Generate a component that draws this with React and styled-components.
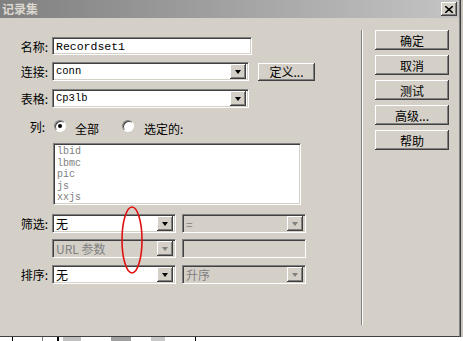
import React from "react";
import styled, { createGlobalStyle, css } from "styled-components";

const GlobalStyle = createGlobalStyle`
  html, body {
    margin: 0;
    padding: 0;
    background: #c8c4bc;
  }
  body {
    width: 463px;
    height: 341px;
    overflow: hidden;
    font-family: "Noto Sans CJK SC", "Liberation Sans", sans-serif;
    font-size: 12px;
    color: #000;
  }
`;

const raised = css`
  background: #d4d0c8;
  box-shadow: inset -1px -1px #404040, inset 1px 1px #ffffff,
    inset -2px -2px #808080, inset 2px 2px #d4d0c8;
`;

const sunken = css`
  border-top: 1px solid #808080;
  border-left: 1px solid #808080;
  border-right: 1px solid #ffffff;
  border-bottom: 1px solid #ffffff;
  box-shadow: inset 1px 1px #404040, inset -1px -1px #d4d0c8;
`;

const Screen = styled.div`
  position: relative;
  display: flex;
  flex-direction: column;
  width: 463px;
  height: 341px;
`;

const Dialog = styled.div`
  display: flex;
  flex-direction: column;
  width: 459px;
  height: 336px;
  background: #d4d0c8;
  border-right: 1px solid #808080;
  border-bottom: 1px solid #404040;
  box-shadow: 1px 0 #404040;
`;

const TitleBar = styled.div`
  display: flex;
  align-items: center;
  justify-content: space-between;
  height: 18px;
  padding: 0 2px 0 2px;
  background: linear-gradient(to right, #808080, #c4c4c4);
`;

const Title = styled.span`
  color: #dcd8d0;
  font-weight: bold;
  font-size: 12px;
  line-height: 18px;
`;

const CloseButton = styled.div`
  ${raised};
  width: 16px;
  height: 14px;
  display: flex;
  align-items: center;
  justify-content: center;
  margin-right: 0;
`;

const Body = styled.div`
  display: flex;
  flex: 1;
`;

const Form = styled.div`
  display: flex;
  flex-direction: column;
  width: 361px;
`;

const Row = styled.div`
  display: flex;
  align-items: center;
  height: ${(p) => p.$h || 19}px;
  margin-top: ${(p) => p.$mt}px;
`;

const Label = styled.div`
  width: 52px;
  padding-right: ${(p) => p.$pr ?? 4}px;
  box-sizing: border-box;
  text-align: right;
  white-space: nowrap;
  flex: none;
`;

const TextField = styled.div`
  ${sunken};
  box-sizing: border-box;
  width: ${(p) => p.$w}px;
  height: ${(p) => p.$h || 19}px;
  margin-left: ${(p) => p.$ml || 0}px;
  padding-left: 3px;
  display: flex;
  align-items: center;
  background: ${(p) => (p.$disabled ? "#d4d0c8" : "#ffffff")};
  font-family: "Liberation Mono", monospace;
  font-size: ${(p) => p.$fs || 11}px;
  flex: none;
`;

const Select = styled.div`
  ${sunken};
  box-sizing: border-box;
  width: ${(p) => p.$w}px;
  height: 19px;
  margin-left: ${(p) => p.$ml || 0}px;
  padding: 0 2px 0 3px;
  display: flex;
  align-items: center;
  justify-content: space-between;
  background: ${(p) => (p.$disabled ? "#d4d0c8" : "#ffffff")};
  color: ${(p) => (p.$disabled ? "#808080" : "#000")};
  flex: none;
`;

const SelectText = styled.span`
  font-family: ${(p) =>
    p.$mono ? '"Liberation Mono", monospace' : '"Noto Sans CJK SC", sans-serif'};
  font-size: ${(p) => (p.$mono ? 10.5 : 12)}px;
  line-height: 15px;
  white-space: nowrap;
`;

const ArrowButton = styled.div`
  ${raised};
  width: 16px;
  height: 15px;
  display: flex;
  align-items: center;
  justify-content: center;
  flex: none;
  &::after {
    content: "";
    width: 0;
    height: 0;
    border-left: 3.5px solid transparent;
    border-right: 3.5px solid transparent;
    border-top: 4px solid ${(p) => (p.$disabled ? "#808080" : "#000")};
    margin-top: 1px;
  }
`;

const PushButton = styled.div`
  ${raised};
  width: ${(p) => p.$w}px;
  height: ${(p) => p.$h}px;
  margin-left: ${(p) => p.$ml || 0}px;
  display: flex;
  align-items: center;
  justify-content: center;
  font-size: 12px;
  flex: none;
`;

const RadioDot = styled.div`
  width: 12px;
  height: 12px;
  box-sizing: border-box;
  border-radius: 50%;
  background: #fff;
  border: 1px solid;
  border-color: #808080 #ffffff #ffffff #808080;
  box-shadow: inset 1px 1px #404040;
  display: flex;
  align-items: center;
  justify-content: center;
  margin-left: ${(p) => p.$ml}px;
  flex: none;
  &::after {
    content: "";
    display: ${(p) => (p.$checked ? "block" : "none")};
    width: 4px;
    height: 4px;
    border-radius: 50%;
    background: #000;
  }
`;

const RadioText = styled.span`
  margin-left: ${(p) => p.$ml}px;
  padding-top: 4px;
  white-space: nowrap;
`;

const ListBox = styled.div`
  ${sunken};
  box-sizing: border-box;
  width: 248px;
  height: 62px;
  margin: 9px 0 0 53px;
  padding: 2px 3px;
  background: #fff;
  color: #808080;
  font-family: "Liberation Mono", monospace;
  font-size: 10px;
  line-height: 11.5px;
  overflow: hidden;
`;

const Separator = styled.div`
  width: 1px;
  height: 295px;
  margin-top: 12px;
  background: #808080;
  border-right: 1px solid #ffffff;
  flex: none;
`;

const ButtonColumn = styled.div`
  display: flex;
  flex-direction: column;
  gap: 5px;
  margin: 12px 0 0 12px;
`;

const Taskbar = styled.div`
  display: flex;
  align-items: flex-end;
  height: 4px;
  background: #ffffff;
`;

const Tick = styled.div`
  width: ${(p) => p.$w}px;
  height: 4px;
  margin-left: ${(p) => p.$ml}px;
  background: ${(p) => p.$c};
`;

const Annotation = styled.svg`
  position: absolute;
  left: 120px;
  top: 206px;
`;

const columns = ["lbid", "lbmc", "pic", "js", "xxjs"];

export default function App() {
  return (
    <Screen>
      <GlobalStyle />
      <Dialog>
        <TitleBar>
          <Title>记录集</Title>
          <CloseButton>
            <svg width="8" height="7" viewBox="0 0 8 7">
              <path d="M0 0 L8 7 M8 0 L0 7" stroke="#000" strokeWidth="1.6" />
            </svg>
          </CloseButton>
        </TitleBar>
        <Body>
          <Form>
            <Row $mt={19} $h={18}>
              <Label>名称:</Label>
              <TextField $w={200} $h={18} $fs={11.5}>Recordset1</TextField>
            </Row>
            <Row $mt={7}>
              <Label>连接:</Label>
              <Select $w={197}>
                <SelectText $mono>conn</SelectText>
                <ArrowButton />
              </Select>
              <PushButton $w={57} $h={18} $ml={9}>定义...</PushButton>
            </Row>
            <Row $mt={8}>
              <Label>表格:</Label>
              <Select $w={197}>
                <SelectText $mono>Cp3lb</SelectText>
                <ArrowButton />
              </Select>
            </Row>
            <Row $mt={10} $h={16}>
              <Label $pr={7}>列:</Label>
              <RadioDot $checked $ml={2} />
              <RadioText $ml={9}>全部</RadioText>
              <RadioDot $ml={23} />
              <RadioText $ml={10}>选定的:</RadioText>
            </Row>
            <ListBox>
              {columns.map((c) => (
                <div key={c}>{c}</div>
              ))}
            </ListBox>
            <Row $mt={9}>
              <Label>筛选:</Label>
              <Select $w={124}>
                <SelectText>无</SelectText>
                <ArrowButton />
              </Select>
              <Select $w={124} $ml={6} $disabled>
                <SelectText>=</SelectText>
                <ArrowButton $disabled />
              </Select>
            </Row>
            <Row $mt={6}>
              <Label />
              <Select $w={124} $disabled>
                <SelectText>URL 参数</SelectText>
                <ArrowButton $disabled />
              </Select>
              <TextField $w={124} $ml={6} $disabled />
            </Row>
            <Row $mt={7}>
              <Label>排序:</Label>
              <Select $w={124}>
                <SelectText>无</SelectText>
                <ArrowButton />
              </Select>
              <Select $w={124} $ml={6} $disabled>
                <SelectText>升序</SelectText>
                <ArrowButton $disabled />
              </Select>
            </Row>
          </Form>
          <Separator />
          <ButtonColumn>
            <PushButton $w={74} $h={20}>确定</PushButton>
            <PushButton $w={74} $h={20}>取消</PushButton>
            <PushButton $w={74} $h={20}>测试</PushButton>
            <PushButton $w={74} $h={20}>高级...</PushButton>
            <PushButton $w={74} $h={20}>帮助</PushButton>
          </ButtonColumn>
        </Body>
      </Dialog>
      <Taskbar>
        <Tick $w={1} $ml={12} $c="#000" />
        <Tick $w={1} $ml={29} $c="#808080" />
        <Tick $w={2} $ml={14} $c="#000" />
        <Tick $w={18} $ml={4} $c="#c0c0c0" />
        <Tick $w={20} $ml={30} $c="#a0a0a0" />
        <Tick $w={14} $ml={20} $c="#c8c8c8" />
        <Tick $w={1} $ml={30} $c="#000" />
      </Taskbar>
      <Annotation width="26" height="70" viewBox="0 0 26 70">
        <ellipse cx="12" cy="34" rx="10" ry="33" fill="none" stroke="#e01010" strokeWidth="1.6" />
      </Annotation>
    </Screen>
  );
}
